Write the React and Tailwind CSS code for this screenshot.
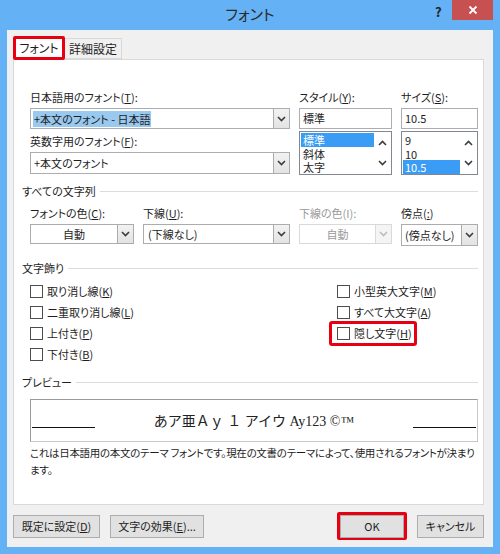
import React from 'react';

const Chevron = ({ up, disabled }) => (
  <svg width="9" height="6" viewBox="0 0 9 6">
    <path
      d={up ? 'M1 5 L4.5 1.5 L8 5' : 'M1 1 L4.5 4.5 L8 1'}
      fill="none"
      stroke={disabled ? '#bdbdbd' : '#3c3c3c'}
      strokeWidth="1.6"
    />
  </svg>
);

const DropButton = ({ disabled }) => (
  <div
    className={
      disabled
        ? 'w-[16px] h-full flex items-center justify-center bg-[#f4f4f4] border-l border-[#dadada]'
        : 'w-[16px] h-full flex items-center justify-center bg-gradient-to-b from-[#f2f2f2] to-[#e3e3e3] border-l border-[#acacac]'
    }
  >
    <Chevron disabled={disabled} />
  </div>
);

const Heading = ({ children, className }) => (
  <div className={'flex items-center h-[16px] ml-[-8px] ' + (className || '')}>
    <span className="pr-[4px]">{children}</span>
    <div className="flex-1 h-px bg-[#dcdcdc]" />
  </div>
);

const Check = ({ children }) => (
  <div className="flex items-center h-[21px] gap-[4px]">
    <div className="w-[13px] h-[13px] border border-[#4d4d4d] bg-white" />
    <span>{children}</span>
  </div>
);

const Button = ({ children, className }) => (
  <div
    className={
      'h-[23px] flex items-center justify-center bg-[#e1e1e1] border border-[#adadad] ' +
      (className || '')
    }
  >
    {children}
  </div>
);

const ListBox = ({ items, selected }) => (
  <div className="mt-[2px] h-[44px] border border-[#828790] bg-white flex">
    <div className="flex-1 flex flex-col pt-[1px] pl-[1px]">
      {items.map((it, i) => (
        <div
          key={i}
          className={
            i === selected
              ? 'h-[14px] leading-[14px] pl-[2px] overflow-hidden bg-[#3a9cf5] text-white'
              : 'h-[14px] leading-[14px] pl-[2px] overflow-hidden'
          }
        >
          {it}
        </div>
      ))}
    </div>
    <div className="w-[17px] flex flex-col items-center justify-between py-[8px]">
      <Chevron up />
      <Chevron />
    </div>
  </div>
);

export default function App() {
  return (
    <div className="w-[500px] h-[554px] bg-[#64b1f6] flex flex-col font-['Noto_Sans_CJK_JP',sans-serif] [font-feature-settings:'palt'] text-[11px] text-[#1e1e1e]">
      <div className="h-[30px] relative flex items-center justify-center">
        <span className="text-[15px] text-[#2a2a2a] mt-[-2px]">フォント</span>
        <span className="absolute left-[435px] top-[2px] text-[13px] font-bold text-[#222]">?</span>
        <div className="absolute left-[452px] top-0 w-[41px] h-[20px] bg-[#c75050] flex items-center justify-center">
          <svg width="10" height="10" viewBox="0 0 10 10">
            <path d="M1.5 1.5 L8.5 8.5 M8.5 1.5 L1.5 8.5" stroke="white" strokeWidth="1.8" />
          </svg>
        </div>
      </div>

      <div className="mx-[7px] mb-[7px] flex-1 bg-[#f0f0f0] pl-[6px] pr-[9px] pt-[6px] flex flex-col">
        <div className="flex items-end h-[23px]">
          <div className="relative z-10 w-[52px] h-[24px] mb-[-1px] bg-white border-[3px] border-[#e60012] rounded-[2px] flex items-center justify-center text-[12px]">
            フォント
          </div>
          <div className="w-[57px] h-[21px] bg-[#f0f0f0] border border-[#d9d9d9] border-l-0 flex items-center justify-center text-[12px]">
            詳細設定
          </div>
        </div>

        <div className="h-[446px] bg-white border border-[#d9d9d9] pt-[29px] pl-[16px] pr-[5px]">
          <div className="flex gap-[9px]">
            <div className="w-[260px]">
              <div className="h-[19px] leading-[16px]">
                日本語用のフォント(<u>T</u>):
              </div>
              <div className="h-[21px] border border-[#abadb3] flex bg-white">
                <div className="flex-1 flex items-center pl-[2px]">
                  <span className="bg-[#99c9ef] px-[1px] leading-[16px]">+本文のフォント - 日本語</span>
                </div>
                <DropButton />
              </div>
              <div className="h-[23px] leading-[16px] pt-[4px]">
                英数字用のフォント(<u>F</u>):
              </div>
              <div className="h-[22px] border border-[#abadb3] flex bg-white">
                <div className="flex-1 flex items-center pl-[3px]">+本文のフォント</div>
                <DropButton />
              </div>
            </div>
            <div className="w-[93px]">
              <div className="h-[19px] leading-[16px]">
                スタイル(<u>Y</u>):
              </div>
              <div className="h-[21px] border border-[#abadb3] bg-white flex items-center pl-[3px]">標準</div>
              <ListBox items={['標準', '斜体', '太字']} selected={0} />
            </div>
            <div className="w-[77px]">
              <div className="h-[19px] leading-[16px]">
                サイズ(<u>S</u>):
              </div>
              <div className="h-[21px] border border-[#abadb3] bg-white flex items-center pl-[3px]">10.5</div>
              <ListBox items={['9', '10', '10.5']} selected={2} />
            </div>
          </div>

          <Heading className="mt-[8px]">すべての文字列</Heading>

          <div className="flex gap-[9px] mt-[6px]">
            <div className="w-[104px]">
              <div className="h-[19px] leading-[16px]">
                フォントの色(<u>C</u>):
              </div>
              <div className="h-[20px] border border-[#acacac] bg-white flex">
                <div className="flex-1 flex items-center justify-center">自動</div>
                <DropButton />
              </div>
            </div>
            <div className="w-[147px]">
              <div className="h-[19px] leading-[16px]">
                下線(<u>U</u>):
              </div>
              <div className="h-[20px] border border-[#acacac] bg-white flex">
                <div className="flex-1 flex items-center pl-[4px]">(下線なし)</div>
                <DropButton />
              </div>
            </div>
            <div className="w-[93px] text-[#9a9a9a]">
              <div className="h-[19px] leading-[16px]">下線の色(I):</div>
              <div className="h-[20px] border border-[#d9d9d9] bg-white flex">
                <div className="flex-1 flex items-center justify-center">自動</div>
                <DropButton disabled />
              </div>
            </div>
            <div className="w-[77px]">
              <div className="h-[19px] leading-[16px]">
                傍点(<u>:</u>)
              </div>
              <div className="h-[22px] border border-[#acacac] bg-white flex">
                <div className="flex-1 flex items-center pl-[3px]">(傍点なし)</div>
                <DropButton />
              </div>
            </div>
          </div>

          <Heading className="mt-[14px]">文字飾り</Heading>

          <div className="flex mt-[5px]">
            <div className="w-[307px] flex flex-col">
              <Check>
                取り消し線(<u>K</u>)
              </Check>
              <Check>
                二重取り消し線(<u>L</u>)
              </Check>
              <Check>
                上付き(<u>P</u>)
              </Check>
              <Check>
                下付き(<u>B</u>)
              </Check>
            </div>
            <div className="flex flex-col">
              <Check>
                小型英大文字(<u>M</u>)
              </Check>
              <Check>
                すべて大文字(<u>A</u>)
              </Check>
              <div className="ml-[-8px] w-[88px] h-[25px] mt-[-2px] border-[3px] border-[#e60012] rounded-[3px] pl-[5px] flex items-center">
                <Check>
                  隠し文字(<u>H</u>)
                </Check>
              </div>
            </div>
          </div>

          <Heading className="mt-[9px]">プレビュー</Heading>

          <div className="mt-[9px] w-[448px] h-[43px] border border-[#9a9a9a] border-b-[#c8c8c8] border-r-[#c8c8c8] flex items-center">
            <div className="w-[63px] h-px bg-[#111] self-end mb-[13px] ml-[1px]" />
            <div className="flex-1 text-center text-[14px] font-['Liberation_Serif','Noto_Sans_CJK_JP',serif] [font-feature-settings:normal] text-[#222] mt-[1px]">
              あア亜Ａｙ １ アイウ Ay123 ©™
            </div>
            <div className="w-[63px] h-px bg-[#111] self-end mb-[13px] mr-[1px]" />
          </div>

          <div className="mt-[2px] w-[452px] text-[10.5px] tracking-[-0.3px] leading-[17px] whitespace-nowrap">
            これは日本語用の本文のテーマ フォントです。現在の文書のテーマによって、使用されるフォントが決まり
            <br />
            ます。
          </div>
        </div>

        <div className="flex items-center mt-[7px] h-[28px]">
          <Button className="w-[87px]">
            既定に設定(<u>D</u>)
          </Button>
          <Button className="w-[94px] ml-[10px]">
            文字の効果(<u>E</u>)...
          </Button>
          <div className="ml-auto w-[70px] h-[28px] border-[3px] border-[#e60012] rounded-[2px] flex items-center justify-center">
            <Button className="w-[64px] h-[22px]">OK</Button>
          </div>
          <Button className="w-[67px] ml-[10px]">キャンセル</Button>
        </div>
      </div>
    </div>
  );
}
